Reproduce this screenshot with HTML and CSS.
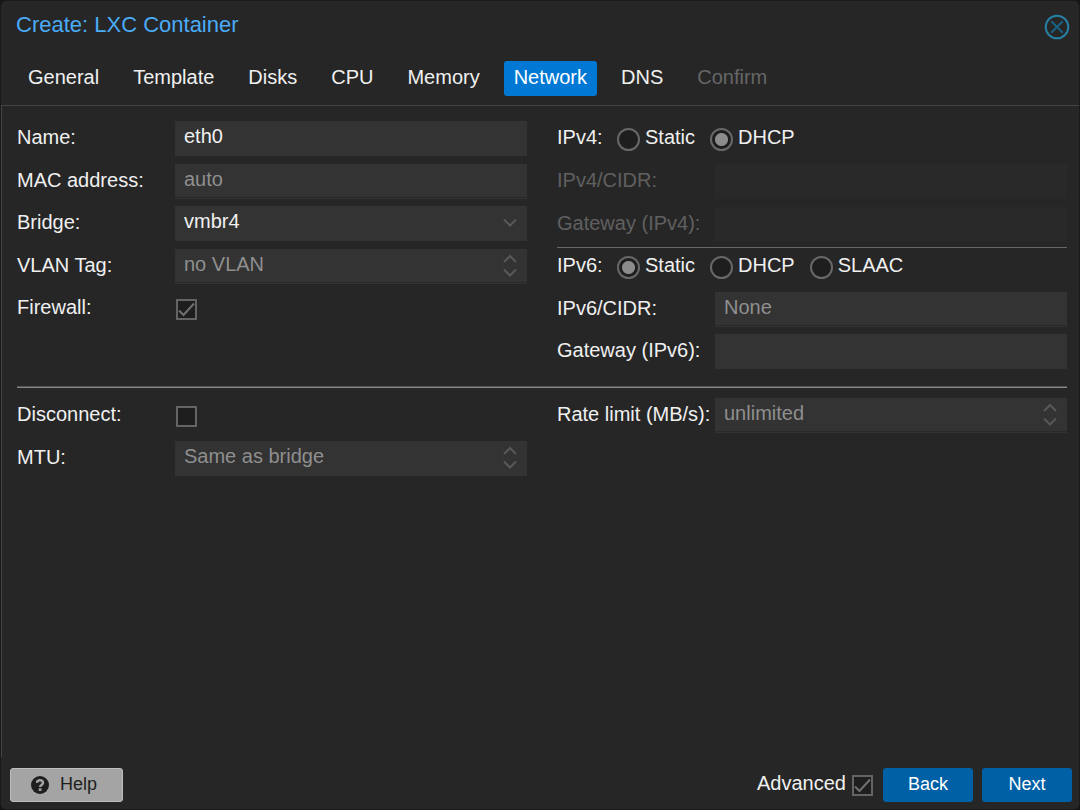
FILE: index.html
```html
<!DOCTYPE html>
<html lang="en">
<head>
<meta charset="utf-8">
<title>Create: LXC Container</title>
<link rel="stylesheet" href="styles.css">
</head>
<body>
<svg class="sprites" aria-hidden="true">
  <symbol id="down" viewBox="0 0 14 10"><path d="M1 1.500 7 7.500 13 1.500"/></symbol>
  <symbol id="updown" viewBox="0 0 14 24"><path d="M1 8 7 2 13 8M1 15.500 7 21.500 13 15.500"/></symbol>
</svg>
<form class="window">
  <header class="titlebar">
    <h1 class="title">Create: LXC Container</h1>
    <button class="close" type="button" aria-label="Close">
      <svg viewBox="0 0 26 26"><circle cx="13" cy="13" r="11.300"/><path d="M7.300 7.300 18.700 18.700M18.700 7.300 7.300 18.700"/></svg>
    </button>
  </header>
  <nav class="tabs">
    <button class="tab" type="button">General</button>
    <button class="tab" type="button">Template</button>
    <button class="tab" type="button">Disks</button>
    <button class="tab" type="button">CPU</button>
    <button class="tab" type="button">Memory</button>
    <button class="tab active" type="button">Network</button>
    <button class="tab" type="button">DNS</button>
    <button class="tab" type="button" disabled>Confirm</button>
  </nav>
  <main class="panel">
    <div class="columns">
      <div class="column">
        <div class="row"><label class="label" for="name">Name:</label><div class="field"><input class="input" id="name" type="text" value="eth0"></div></div>
        <div class="row compact"><label class="label" for="mac">MAC address:</label><div class="field"><input class="input lined" id="mac" type="text" placeholder="auto"></div></div>
        <div class="row"><label class="label" for="bridge">Bridge:</label><div class="field"><select class="input select" id="bridge"><option>vmbr4</option></select><svg class="trigger single"><use href="#down"/></svg></div></div>
        <div class="row compact"><label class="label" for="vlan">VLAN Tag:</label><div class="field"><input class="input lined" id="vlan" type="text" placeholder="no VLAN"><svg class="trigger"><use href="#updown"/></svg></div></div>
        <div class="row"><label class="label" for="firewall">Firewall:</label><span class="check"><input id="firewall" type="checkbox" checked><svg viewBox="0 0 21 21"><path d="M3 11.500 7.500 16 18 4.500"/></svg></span></div>
      </div>
      <div class="column">
        <div class="row" role="radiogroup" aria-labelledby="v4">
          <span class="group-label" id="v4">IPv4:</span>
          <label class="choice"><input class="radio" type="radio" name="ipv4">Static</label>
          <label class="choice"><input class="radio" type="radio" name="ipv4" checked>DHCP</label>
        </div>
        <div class="row disabled"><label class="label" for="cidr4">IPv4/CIDR:</label><div class="field"><input class="input" id="cidr4" type="text" disabled></div></div>
        <div class="row disabled"><label class="label" for="gw4">Gateway (IPv4):</label><div class="field"><input class="input" id="gw4" type="text" disabled></div></div>
        <hr class="thin">
        <div class="row" role="radiogroup" aria-labelledby="v6">
          <span class="group-label" id="v6">IPv6:</span>
          <label class="choice"><input class="radio" type="radio" name="ipv6" checked>Static</label>
          <label class="choice"><input class="radio" type="radio" name="ipv6">DHCP</label>
          <label class="choice"><input class="radio" type="radio" name="ipv6">SLAAC</label>
        </div>
        <div class="row compact"><label class="label" for="cidr6">IPv6/CIDR:</label><div class="field"><input class="input lined" id="cidr6" type="text" placeholder="None"></div></div>
        <div class="row"><label class="label" for="gw6">Gateway (IPv6):</label><div class="field"><input class="input" id="gw6" type="text"></div></div>
      </div>
    </div>
    <hr class="divider">
    <div class="columns">
      <div class="column">
        <div class="row"><label class="label" for="disconnect">Disconnect:</label><span class="check"><input id="disconnect" type="checkbox"></span></div>
        <div class="row"><label class="label" for="mtu">MTU:</label><div class="field"><input class="input" id="mtu" type="text" placeholder="Same as bridge"><svg class="trigger"><use href="#updown"/></svg></div></div>
      </div>
      <div class="column">
        <div class="row compact"><label class="label" for="rate">Rate limit (MB/s):</label><div class="field"><input class="input lined" id="rate" type="text" placeholder="unlimited"><svg class="trigger"><use href="#updown"/></svg></div></div>
      </div>
    </div>
  </main>
  <footer class="footer">
    <button class="button help" type="button"><svg viewBox="0 0 18 18"><circle cx="9" cy="9" r="9"/><path d="M6 6.800C6.200 3.300 12 3.400 12 6.700 12 9 9.100 8.900 9.100 11"/><rect x="7.700" y="12.300" width="2.800" height="2.600"/></svg>Help</button>
    <label class="advanced" for="advanced">Advanced</label>
    <span class="check"><input id="advanced" type="checkbox" checked><svg viewBox="0 0 21 21"><path d="M3 11.500 7.500 16 18 4.500"/></svg></span>
    <button class="button primary" type="button">Back</button>
    <button class="button primary" type="button">Next</button>
  </footer>
</form>
</body>
</html>
```

FILE: styles.css
```css
* { box-sizing: border-box; }

body {
  margin: 0;
  background: #151515;
  color: #f0f0f0;
  font: 20px/24px "Liberation Sans", Arial, sans-serif;
}

button, input, select { font: inherit; color: inherit; margin: 0; }

.sprites { display: none; }

.window {
  display: flex;
  flex-direction: column;
  min-height: 100vh;
  border: 1px solid #1a1a1a;
  border-radius: 6px;
  background: #262626;
}

.titlebar {
  display: flex;
  justify-content: space-between;
  height: 60px;
  padding: 12px 9px 0 15px;
}

.title {
  margin: 0;
  color: #4aabf7;
  font-size: 22px;
  font-weight: 400;
  line-height: 24px;
}

.close {
  width: 26px;
  height: 26px;
  margin-top: 1px;
  padding: 0;
  border: 0;
  background: none;
}

.close svg { display: block; fill: none; stroke: #2580a5; stroke-width: 2; }
.close path { stroke: #186284; }

.tabs {
  display: flex;
  gap: 14px;
  padding: 0 17px 9px;
  border-bottom: 1px solid #444;
}

.tab {
  height: 35px;
  padding: 0 10px 3px;
  border: 0;
  border-radius: 3px;
  background: none;
}

.tab.active { background: #0078d4; color: #fff; }
.tab:disabled { color: #666; }

.panel {
  flex: 1;
  padding: 15px 12px 0 15px;
  border-left: 1px solid #444;
}

.columns { display: grid; grid-template-columns: 1fr 1fr; gap: 30px; }

.row {
  display: flex;
  height: 35px;
  margin-bottom: 8px;
}

.row:last-child { margin-bottom: 0; }
.compact { height: 34px; }

.label {
  flex: 0 0 158px;
  padding-top: 4px;
  white-space: nowrap;
}

.field { position: relative; flex: 1; }

.input {
  display: block;
  appearance: none;
  width: 100%;
  height: 35px;
  padding: 0 9px 4px;
  border: 0;
  border-radius: 0;
  background: #333;
}

.select { padding-bottom: 5px; }
.input.lined { box-shadow: inset 0 -1px #333, inset 0 -2px #292929; }
.input::placeholder { color: #8f8f8f; opacity: 1; }

.trigger {
  position: absolute;
  top: 5px;
  right: 10px;
  width: 14px;
  height: 24px;
  fill: none;
  stroke: #585858;
  stroke-width: 2;
}

.trigger.single { top: 12px; height: 10px; }

.disabled { color: #606060; }
.disabled .input { background: #292929; }

.check { position: relative; width: 21px; height: 21px; margin: 8px 0 0 1px; }

.check input {
  display: block;
  appearance: none;
  width: 21px;
  height: 21px;
  border: 2px solid #646464;
  background: #1e1e1e;
}

.check svg {
  position: absolute;
  inset: 0;
  fill: none;
  stroke: #707070;
  stroke-width: 2;
  pointer-events: none;
}

.group-label { width: 60px; padding-top: 4px; }

.choice { display: flex; gap: 5px; padding-top: 4px; margin-right: 15px; }

.radio {
  appearance: none;
  width: 23px;
  height: 23px;
  margin-top: 3px;
  border: 2px solid #686868;
  border-radius: 50%;
  background: #1e1e1e;
}

.radio:checked { background: radial-gradient(circle, #8c8c8c 6px, #1e1e1e 7px); }

.thin { height: 1px; margin: -3px 0 1px; border: 0; background: #686868; }

.divider {
  height: 2px;
  margin: 17px 0 10px;
  border: 0;
  border-top: 1px solid #555;
  background: #858585;
}

.footer {
  display: flex;
  align-items: center;
  padding: 11px 7px 7px 9px;
}

.button {
  height: 34px;
  padding: 0 0 2px;
  border: 0;
  border-radius: 3px;
  font-size: 18px;
}

.primary { width: 90px; margin-left: 9px; background: #0060a5; color: #fff; }

.help {
  display: flex;
  align-items: center;
  justify-content: center;
  gap: 11px;
  width: 113px;
  padding-right: 5px;
  border: 1px solid #bdbdbd;
  background: #a4a4a4;
  color: #1e1e1e;
}

.help svg { width: 18px; height: 18px; margin-top: 2px; fill: #1e1e1e; }
.help path { fill: none; stroke: #a4a4a4; stroke-width: 2.500; }
.help rect { fill: #a4a4a4; }

.advanced { margin-left: auto; padding: 0 6px 5px 0; }
.footer .check { margin: 0 1px 0 0; }
```
